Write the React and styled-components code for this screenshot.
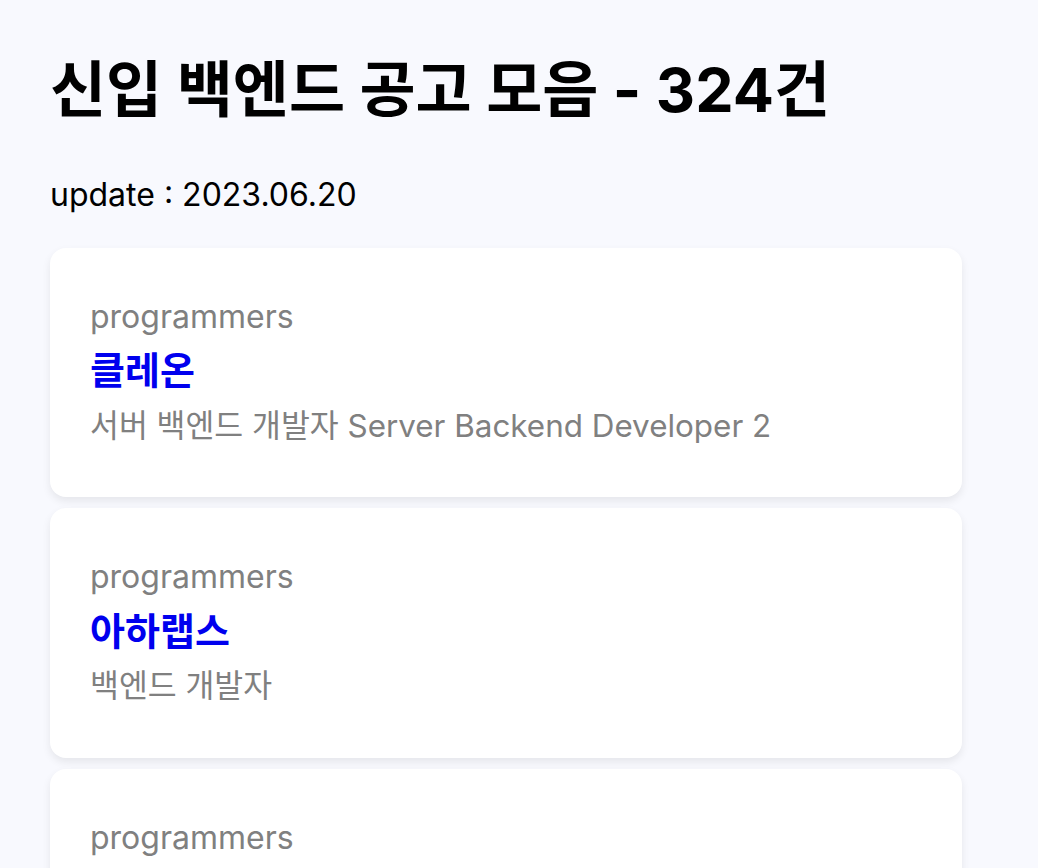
import React from 'react';
import styled, { createGlobalStyle } from 'styled-components';

const jobs = [
  { site: 'programmers', company: '클레온', title: '서버 백엔드 개발자 Server Backend Developer 2' },
  { site: 'programmers', company: '아하랩스', title: '백엔드 개발자' },
  { site: 'programmers', company: '코드잇', title: '백엔드 개발자' },
];

const App = () => {
  return (
    <Page>
      <GlobalStyle />
      <Title>신입 백엔드 공고 모음 - 324건</Title>
      <Updated>update : 2023.06.20</Updated>
      <List>
        {jobs.map((job, i) => (
          <Card key={i}>
            <Site>{job.site}</Site>
            <Company>{job.company}</Company>
            <Position>{job.title}</Position>
          </Card>
        ))}
      </List>
    </Page>
  );
};

export default App;

const GlobalStyle = createGlobalStyle`
  body {
    margin: 0;
    background: #f8f9fe;
    font-family: Inter, 'Noto Sans CJK KR', sans-serif;
  }
`;

const Page = styled.div`
  padding: 54px 76px 0 50px;
  min-height: 100vh;
  box-sizing: border-box;
`;

const Title = styled.h1`
  margin: 0;
  font-size: 61px;
  font-weight: 700;
  line-height: 1.2;
  color: #000;
`;

const Updated = styled.p`
  margin: 49px 0 33px;
  font-size: 32px;
  line-height: 1.2;
  color: #000;
`;

const List = styled.div`
  display: flex;
  flex-direction: column;
  gap: 11px;
`;

const Card = styled.div`
  display: flex;
  flex-direction: column;
  padding: 50px 40px 52px;
  background: #fff;
  border-radius: 16px;
  box-shadow: 0 4px 8px rgba(0, 0, 0, 0.08);
`;

const Site = styled.div`
  font-size: 32px;
  line-height: 1.2;
  color: gray;
`;

const Company = styled.div`
  margin: 12px 0 14px;
  font-size: 38px;
  font-weight: 700;
  line-height: 1.2;
  color: #0000ee;
`;

const Position = styled.div`
  font-size: 31.4px;
  line-height: 1.2;
  color: gray;
`;
